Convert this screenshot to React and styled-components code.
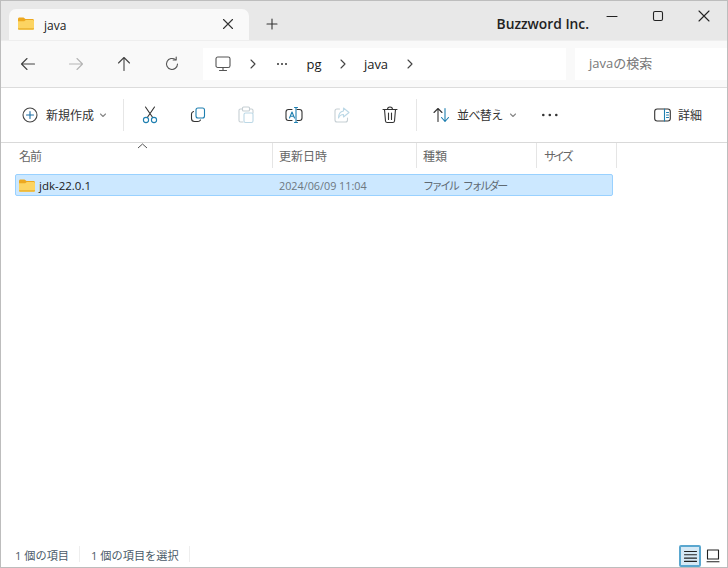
import React from "react";
import styled, { createGlobalStyle } from "styled-components";

const Global = createGlobalStyle`
  html, body { margin: 0; padding: 0; background: #fff; }
  #root { width: 728px; height: 568px; }
  * { box-sizing: border-box; }
`;
const Win = styled.div`
  width: 728px; height: 568px; display: flex; flex-direction: column;
  border: 1px solid #bdbdbd; background: #fff; overflow: hidden;
  font-family: "Open Sans", "Noto Sans CJK JP", sans-serif; color: #1a1a1a; font-size: 12px;
`;
const TitleBar = styled.div`
  height: 39px; flex: none; background: #e8e8e8; display: flex; align-items: flex-end; padding-left: 8px;
`;
const Tab = styled.div`
  width: 240px; height: 31px; background: #f9f9f9; border-radius: 7px 7px 0 0;
  display: flex; align-items: center; padding: 0 15px 2px 9px; gap: 10px;
`;
const TabTitle = styled.span` flex: 1; font-size: 12px; padding-top: 3px; `;
const TabAction = styled.div`
  display: flex; align-items: center; justify-content: center; margin-left: ${p => p.$ml || 0}px;
  height: 31px; padding-bottom: 2px;
`;
const Brand = styled.div`
  margin-left: auto; align-self: center; margin-top: 5px; font-size: 13.8px; font-weight: 600; color: #222; white-space: nowrap;
`;
const Controls = styled.div` display: flex; align-self: flex-start; `;
const Ctl = styled.div`
  width: 46px; height: 29px; display: flex; align-items: center; justify-content: center;
`;
const AddressRow = styled.div`
  height: 48px; flex: none; background: #f9f9f9; border-bottom: 1px solid #dcdcdc; border-top: 1px solid #eee;
  display: flex; align-items: center; padding-left: 3px;
`;
const NavBtn = styled.div`
  width: 48px; height: 32px; flex: none; display: flex; align-items: center; justify-content: center;
`;
const Crumbs = styled.div`
  width: 363px; height: 32px; margin-left: 7px; background: #fff; flex: none; display: flex; align-items: center;
  font-size: 13px; padding-bottom: 1px;
`;
const Crumb = styled.span`
  width: ${p => p.$w}px; flex: none; display: flex; align-items: center; justify-content: center;
`;
const Search = styled.div`
  flex: 1; height: 32px; margin-left: 9px; background: #fff; color: #777; font-size: 13px;
  display: flex; align-items: center; padding: 0 0 3px 14px;
`;
const Toolbar = styled.div`
  height: 55px; flex: none; border-bottom: 1px solid #d9d9d9; display: flex; align-items: center; padding-left: 21px; background: #fff;
`;
const Labeled = styled.div`
  display: flex; align-items: center; flex: none; width: ${p => p.$w}px; font-size: 12px; color: #333;
`;
const Label = styled.span`
  margin-left: ${p => p.$ml}px; white-space: nowrap; display: flex; align-items: center;
  letter-spacing: ${p => p.$ls || 0}px;
`;
const Sep = styled.div` width: 1px; height: 32px; background: #e6e6e6; flex: none; margin: 0 ${p => p.$r || 0}px 0 ${p => p.$l || 0}px; `;
const ToolBtn = styled.div`
  width: 48px; height: 32px; flex: none; display: flex; align-items: center; justify-content: center;
`;
const Details = styled.div`
  margin-left: auto; margin-right: 25px; display: flex; align-items: center; gap: 7px; font-size: 12px; color: #333;
`;
const Content = styled.div` flex: 1; display: flex; flex-direction: column; min-height: 0; position: relative; `;
const Header = styled.div`
  height: 25px; flex: none; display: grid; grid-template-columns: 272px 144px 120px 80px; color: #666; font-size: 12px;
`;
const HCell = styled.div`
  border-right: 1px solid #e5e5e5; display: flex; align-items: center; padding-left: ${p => p.$pl || 6}px;
  letter-spacing: ${p => p.$ls || 0}px;
`;
const SortCaret = styled.svg` position: absolute; left: 136px; top: 0px; `;
const Body = styled.div` flex: 1; padding: 6px 0 0 14px; `;
const FileRow = styled.div`
  width: 598px; height: 22px; background: #cce8ff; border: 1px solid #99d1ff; border-radius: 2px;
  display: grid; grid-template-columns: 256px 144px 1fr; align-items: center; font-size: 11px; color: #666;
`;
const NameCell = styled.div` display: flex; align-items: center; gap: 4px; padding-left: 3px; color: #1a1a1a; font-size: 11.5px; `;
const DateCell = styled.div` padding-left: 7px; font-size: 10.8px; color: #6d7780; `;
const TypeCell = styled.div`
  padding-left: 7px; font-size: 11px; color: #5f6a73; letter-spacing: -2.4px; word-spacing: 5px; white-space: nowrap;
`;
const Status = styled.div`
  height: 26px; flex: none; display: flex; align-items: center; padding-left: 14px; font-size: 11.2px; color: #4a5a68;
`;
const StatusText = styled.span` white-space: nowrap; padding-top: 1px; `;
const StatusSep = styled.div` width: 1px; height: 16px; background: #eeeeee; margin: 0 ${p => p.$r}px 0 ${p => p.$l}px; `;
const Views = styled.div` margin-left: auto; margin-right: 3px; align-self: flex-end; display: flex; align-items: center; gap: 1px; `;
const ViewBtn = styled.div`
  width: 22px; height: 22px; display: flex; align-items: center; justify-content: center;
  background: ${p => p.$on ? "#d6e9f5" : "transparent"}; border: ${p => p.$on ? "2px solid #5aa7cf" : "none"}; border-radius: 2px;
`;

const Folder = ({ w = 16, h = 13 }) => (
  <svg width={w} height={h} viewBox="0 0 16 13">
    <path d="M0 2c0-1 .6-1.6 1.5-1.6h4L7.5 2H14.5c.9 0 1.5.6 1.5 1.5V5H0z" fill="#eda81f" />
    <path d="M0 4.2h6.2L7.8 3H14.6c.8 0 1.4.6 1.4 1.4V11.4c0 .9-.6 1.4-1.4 1.4H1.4C.6 12.8 0 12.3 0 11.4z" fill="#fcd462" />
    <path d="M0 11.4c0 .9.6 1.4 1.4 1.4h13.2c.8 0 1.4-.5 1.4-1.4v-.4H0z" fill="#eeb93a" />
  </svg>
);
const S = ({ w = 18, h = 18, c = "#444", sw = 1.1, children }) => (
  <svg width={w} height={h} viewBox={`0 0 ${w} ${h}`} fill="none" stroke={c} strokeWidth={sw} strokeLinecap="round" strokeLinejoin="round">{children}</svg>
);
const Chevron = () => <S w={8} h={12}><path d="M2 2l4 4-4 4" /></S>;
const Arrow = ({ c, flip }) => (
  <S c={c}><g transform={flip ? "rotate(180 9 9)" : ""}><path d="M2.5 9h13M8 3.5L2.5 9 8 14.5" /></g></S>
);
const Dots = ({ r = 1.1, gap = 5 }) => (
  <svg width={gap * 2 + r * 2 + 2} height="6" viewBox={`0 0 ${gap * 2 + r * 2 + 2} 6`} fill="#333">
    <circle cx={r + 1} cy="3" r={r} /><circle cx={r + 1 + gap} cy="3" r={r} /><circle cx={r + 1 + gap * 2} cy="3" r={r} />
  </svg>
);

export default function App() {
  return (
    <Win>
      <Global />
      <TitleBar>
        <Tab>
          <Folder />
          <TabTitle>java</TabTitle>
          <S w={12} h={12} c="#333"><path d="M1.5 1.5l9 9M10.5 1.5l-9 9" /></S>
        </Tab>
        <TabAction $ml={17}><S w={12} h={12} c="#333"><path d="M6 1v10M1 6h10" /></S></TabAction>
        <Brand>Buzzword Inc.</Brand>
        <Controls>
          <Ctl><S w={12} h={12} c="#222"><path d="M1 6.500h10" /></S></Ctl>
          <Ctl><S w={12} h={12} c="#222"><rect x="1.500" y="1.500" width="9" height="9" rx="1.500" /></S></Ctl>
          <Ctl><S w={12} h={12} c="#222"><path d="M1 1l10 10M11 1L1 11" /></S></Ctl>
        </Controls>
      </TitleBar>
      <AddressRow>
        <NavBtn><Arrow c="#444" /></NavBtn>
        <NavBtn><Arrow c="#b5b5b5" flip /></NavBtn>
        <NavBtn><S c="#444"><path d="M9 15.500V2.500M3.500 8L9 2.500 14.500 8" /></S></NavBtn>
        <NavBtn>
          <S c="#555"><path d="M14.500 9a5.500 5.500 0 1 1-2-4.300" /><path d="M13.200 2v3h-3" /></S>
        </NavBtn>
        <Crumbs>
          <Crumb $w={40}>
            <S w={16} h={16} c="#555"><rect x="1" y="1" width="14" height="10.500" rx="1.800" /><path d="M8 11.500V14M4.500 14.500h7" /></S>
          </Crumb>
          <Crumb $w={20}><Chevron /></Crumb>
          <Crumb $w={38}><Dots r={1} gap={4} /></Crumb>
          <Crumb $w={26}>pg</Crumb>
          <Crumb $w={32}><Chevron /></Crumb>
          <Crumb $w={34}>java</Crumb>
          <Crumb $w={34}><Chevron /></Crumb>
        </Crumbs>
        <Search>javaの検索</Search>
      </AddressRow>
      <Toolbar>
        <Labeled $w={101}>
          <S w={16} h={16} c="#444"><circle cx="8" cy="8" r="7" /><path d="M8 4.500v7M4.500 8h7" stroke="#1d6fa5" /></S>
          <Label $ml={8}>新規作成</Label>
          <Label $ml={5}><S w={8} h={8} c="#888"><path d="M1.500 3L4 5.500 6.500 3" /></S></Label>
        </Labeled>
        <Sep $r={2} />
        <ToolBtn>
          <S w={16} h={18} c="#333"><path d="M3.500 1l7.200 10.500M12.500 1L5.300 11.500" /><circle cx="4" cy="14" r="2.600" stroke="#1e7fb0" /><circle cx="12" cy="14" r="2.600" stroke="#1e7fb0" /></S>
        </ToolBtn>
        <ToolBtn>
          <S w={16} h={16} c="#333"><rect x="6" y="1" width="8.500" height="10" rx="2" stroke="#1e7fb0" /><path d="M3.500 4.500C2.200 5 1.500 5.800 1.500 7v4.500C1.500 13.400 2.600 14.500 4.500 14.500h3.500c1.200 0 2-.6 2.500-1.500" /></S>
        </ToolBtn>
        <ToolBtn>
          <S w={16} h={18} c="#c6cfd4"><path d="M4 3H2.500C1.600 3 1 3.600 1 4.500v10c0 .9.6 1.500 1.500 1.500H5M12 3h1.500c.9 0 1.500.6 1.500 1.500V7" /><rect x="4.500" y="1" width="7" height="4" rx="1" /><rect x="6" y="7" width="9" height="9.500" rx="1.500" stroke="#bcd8e6" /></S>
        </ToolBtn>
        <ToolBtn>
          <S w={18} h={18} c="#333"><path d="M7 3.500H3.500C2 3.500 1 4.500 1 6v6c0 1.500 1 2.500 2.500 2.500H7M12 3.500h2.500C16 3.500 17 4.500 17 6v6c0 1.500-1 2.500-2.500 2.500H12" /><path d="M4.500 12L7 6l2.500 6M5.500 10.200h3" stroke="#1e7fb0" /><path d="M9.500 1.500h3M9.500 16.500h3M11 1.500v15" stroke="#1e7fb0" /></S>
        </ToolBtn>
        <ToolBtn>
          <S w={16} h={16} c="#c6cfd4"><path d="M5.500 2H3C1.800 2 1 2.800 1 4v9c0 1.200.8 2 2 2h8.500c1.200 0 2-.8 2-2v-2" /><path d="M9.500 1L15 5.500 9.500 10V7.500C7.500 7.500 5.500 8.500 4.500 11c0-4 2-6.500 5-7z" stroke="#bcd8e6" /></S>
        </ToolBtn>
        <ToolBtn>
          <S w={16} h={18} c="#333"><path d="M1 3.500h14M5.500 3.500C5.500 2 6.500 1 8 1s2.500 1 2.500 2.500M2.500 3.500l1 11.500c.1 1 .7 1.500 1.700 1.500h5.600c1 0 1.600-.5 1.700-1.500l1-11.500M6.500 7v6.500M9.500 7v6.500" /></S>
        </ToolBtn>
        <Sep $l={2} />
        <Labeled $w={108}>
          <Label $ml={16}><S w={17} h={16} c="#333"><path d="M5 14.500V1.500M1 5.500l4-4 4 4" /><path d="M12 1.500v13M8.500 10.500l3.500 4 3.500-4" stroke="#1e7fb0" /></S></Label>
          <Label $ml={7} $ls={-0.6}>並べ替え</Label>
          <Label $ml={6}><S w={8} h={8} c="#888"><path d="M1.500 3L4 5.500 6.500 3" /></S></Label>
        </Labeled>
        <Label $ml={16}><Dots r={1.300} gap={6.500} /></Label>
        <Details>
          <S w={17} h={14} c="#1e7fb0"><rect x=".7" y="1" width="15.600" height="12" rx="2.500" stroke="#333" /><path d="M10.500 1v12M12.500 4.500h2M12.500 7h2M12.500 9.500h2" /></S>
          詳細
        </Details>
      </Toolbar>
      <Content>
        <SortCaret width="11" height="6" viewBox="0 0 11 6" fill="none" stroke="#555" strokeWidth="1"><path d="M1 5l4.500-4L10 5" /></SortCaret>
        <Header>
          <HCell $pl={18} $ls={-1}>名前</HCell>
          <HCell>更新日時</HCell>
          <HCell>種類</HCell>
          <HCell $pl={7} $ls={-3}>サイズ</HCell>
        </Header>
        <Body>
          <FileRow>
            <NameCell><Folder />jdk-22.0.1</NameCell>
            <DateCell>2024/06/09 11:04</DateCell>
            <TypeCell>ファイル フォルダー</TypeCell>
          </FileRow>
        </Body>
        <Status>
          <StatusText>1 個の項目</StatusText>
          <StatusSep $l={10} $r={11} />
          <StatusText>1 個の項目を選択</StatusText>
          <StatusSep $l={10} $r={0} />
          <Views>
            <ViewBtn $on><S w={13} h={13} c="#222"><path d="M.5 1.500h12M.5 4.800h12M.5 8.100h12M.5 11.400h12" /></S></ViewBtn>
            <ViewBtn><S w={14} h={14} c="#222"><rect x="1.500" y="1" width="11" height="9" /><path d="M1 12.800h12" /></S></ViewBtn>
          </Views>
        </Status>
      </Content>
    </Win>
  );
}
